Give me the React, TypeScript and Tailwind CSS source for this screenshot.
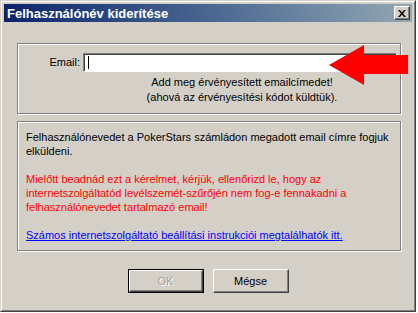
import React from "react";

const font = { fontFamily: '"Liberation Sans", Arial, sans-serif' };

function CloseButton() {
    return (
        <div className="w-[16px] h-[14px] bg-[#d4d0c8] border-t border-l border-t-white border-l-white border-b border-r border-b-[#404040] border-r-[#404040] shadow-[inset_-1px_-1px_0_#808080] flex items-center justify-center">
            <svg width="8" height="7" viewBox="0 0 8 7">
                <path d="M0 0h2l2 2.5L6 0h2L5 3.5 8 7H6L4 4.5 2 7H0l3-3.5z" fill="#000" />
            </svg>
        </div>
    );
}

function Arrow() {
    return (
        <svg
            className="absolute left-[328px] top-[44px]"
            width="79"
            height="40"
            viewBox="0 0 79 40"
        >
            <polygon
                points="0,20 35,0 35,10 79,10 79,29 35,29 35,40"
                fill="#ff0000"
            />
        </svg>
    );
}

function WinButton({
    label,
    disabled,
    isDefault,
}: {
    label: string;
    disabled?: boolean;
    isDefault?: boolean;
}) {
    return (
        <div
            className={
                isDefault
                    ? "w-[76px] h-[24px] border border-black"
                    : "w-[76px] h-[24px]"
            }
        >
            <div className="w-full h-full bg-[#d4d0c8] border-t border-l border-t-white border-l-white border-b border-r border-b-[#404040] border-r-[#404040] shadow-[inset_-1px_-1px_0_#808080] flex items-center justify-center text-[11px]">
                {disabled ? (
                    <span className="text-[#a0a0a0] [text-shadow:1px_1px_0_#fff]">{label}</span>
                ) : (
                    <span className="text-black">{label}</span>
                )}
            </div>
        </div>
    );
}

export default function App() {
    return (
        <div className="w-[418px] h-[313px] bg-white" style={font}>
            <div className="relative w-[416px] h-[312px] border-t border-l border-t-[#d4d0c8] border-l-[#d4d0c8] border-b border-r border-b-[#404040] border-r-[#404040]">
                <div className="w-full h-full border-t border-l border-t-white border-l-white border-b border-r border-b-[#808080] border-r-[#808080] bg-[#d4d0c8] p-[2px] flex flex-col">
                    <div className="h-[18px] flex items-center justify-between pl-[3px] pr-[2px] bg-gradient-to-r from-[#0a246a] to-[#93a8b4]">
                        <span className="text-white font-bold text-[13px] leading-none">
                            Felhasználónév kiderítése
                        </span>
                        <CloseButton />
                    </div>

                    <div className="flex flex-col pl-[13px] pr-[11px]">
                        <div className="mt-[21px] h-[71px] border border-[#808080] shadow-[1px_1px_0_#fff,inset_1px_1px_0_#fff] pt-[9px] text-[11px] text-black">
                            <div className="flex items-center">
                                <span className="w-[65px] text-right pr-[3px]">Email:</span>
                                <div className="w-[314px] h-[19px] bg-white border-t border-l border-t-[#808080] border-l-[#808080] border-b border-r border-b-white border-r-white shadow-[inset_1px_1px_0_#404040] flex items-center pl-[4px]">
                                    <div className="w-[1px] h-[13px] bg-black" />
                                </div>
                            </div>
                            <div className="ml-[67px] w-[314px] mt-[3px] text-center leading-[15px]">
                                <p>Add meg érvényesített emailcímedet!</p>
                                <p>(ahová az érvényesítési kódot küldtük).</p>
                            </div>
                        </div>

                        <div className="mt-[7px] h-[130px] border border-[#808080] shadow-[1px_1px_0_#fff,inset_1px_1px_0_#fff] pt-[8px] pl-[8px] text-[11px] leading-[14px] whitespace-nowrap">
                            <p className="text-black">
                                Felhasználónevedet a PokerStars számládon megadott email címre fogjuk
                                <br />
                                elküldeni.
                            </p>
                            <p className="text-[#ff0000] mt-[14px]">
                                Mielőtt beadnád ezt a kérelmet, kérjük, ellenőrizd le, hogy az
                                <br />
                                internetszolgáltatód levélszemét-szűrőjén nem fog-e fennakadni a
                                <br />
                                felhasználónevedet tartalmazó email!
                            </p>
                            <p className="mt-[14px]">
                                <a className="text-[#0000ff] underline">
                                    Számos internetszolgáltató beállítási instrukciói megtalálhatók itt.
                                </a>
                            </p>
                        </div>

                        <div className="mt-[18px] flex justify-center gap-[9px] pr-[2px]">
                            <WinButton label="OK" disabled isDefault />
                            <WinButton label="Mégse" />
                        </div>
                    </div>
                </div>
                <Arrow />
            </div>
        </div>
    );
}
